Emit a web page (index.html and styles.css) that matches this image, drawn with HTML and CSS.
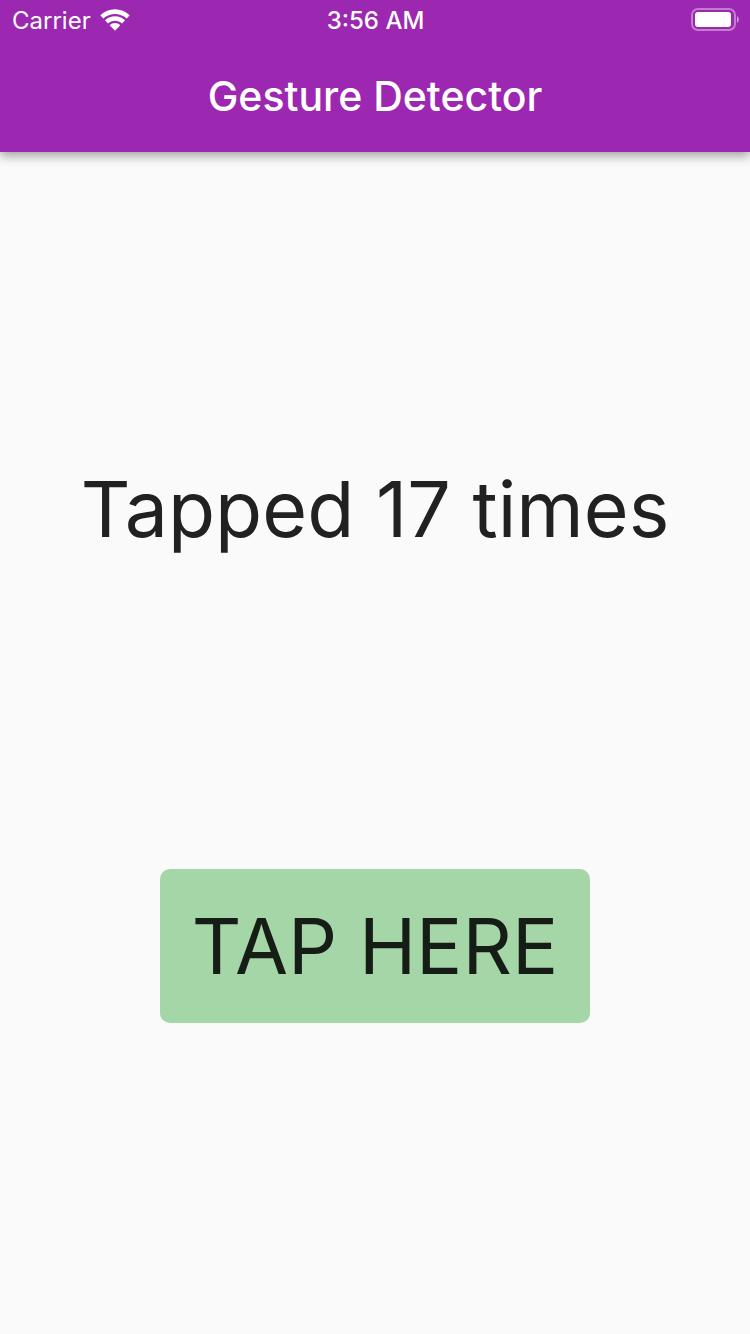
FILE: index.html
```html
<!DOCTYPE html>
<html lang="en">
<head>
<meta charset="utf-8">
<meta name="viewport" content="width=device-width, initial-scale=1">
<title>Gesture Detector</title>
<link rel="stylesheet" href="styles.css">
</head>
<body>
<header class="app-bar">
  <div class="status-bar">
    <div class="carrier">
      <span>Carrier</span>
      <svg class="wifi" viewBox="0 0 30 22" aria-hidden="true">
        <path d="M0.300 6.300C8.300-1.700 21.700-1.700 29.700 6.300L26.700 9.500C20.200 3.400 9.800 3.400 3.300 9.500Z"/>
        <path d="M5 11.200C10.500 5.800 19.500 5.800 25 11.200L22 14.400C18.100 10.800 11.900 10.800 8 14.400Z"/>
        <path d="M9.700 16.200C12.700 13.300 17.300 13.300 20.300 16.200L15 21.700Z"/>
      </svg>
    </div>
    <time class="clock">3:56 AM</time>
    <svg class="battery" viewBox="0 0 48 24" aria-hidden="true">
      <rect class="battery-case" x="1" y="1" width="43" height="21" rx="6"/>
      <rect x="4" y="4" width="36" height="15" rx="3"/>
      <path class="battery-cap" d="M46 8C48.500 9.500 48.500 13.500 46 15Z"/>
    </svg>
  </div>
  <h1 class="title">Gesture Detector</h1>
</header>
<main class="content">
  <p class="message">Tapped 17 times</p>
  <button class="tap-button" type="button">TAP HERE</button>
</main>
</body>
</html>
```

FILE: styles.css
```css
* {
  box-sizing: border-box;
}

body {
  margin: 0;
  min-height: 100vh;
  display: flex;
  flex-direction: column;
  background: #fafafa;
  color: #212121;
  font-family: Inter, "Liberation Sans", sans-serif;
}

.app-bar {
  background: #9c27b0;
  color: #fff;
  box-shadow: 0 4px 10px rgba(0, 0, 0, 0.36);
}

.status-bar {
  display: grid;
  grid-template-columns: 1fr auto 1fr;
  align-items: center;
  height: 40px;
  padding: 0 11px 0 12px;
  font-size: 24px;
}

.carrier {
  display: flex;
  align-items: center;
  gap: 9px;
}

.wifi {
  width: 30px;
  height: 22px;
  fill: currentColor;
}

.clock {
  font-weight: 500;
}

.battery {
  width: 48px;
  height: 24px;
  justify-self: end;
  fill: currentColor;
}

.battery-case {
  fill: none;
  stroke: currentColor;
  stroke-width: 2;
  opacity: 0.4;
}

.battery-cap {
  opacity: 0.5;
}

.title {
  margin: 0;
  height: 112px;
  line-height: 112px;
  text-align: center;
  font-size: 41px;
  font-weight: 500;
}

.content {
  flex: 1;
  display: flex;
  flex-direction: column;
  align-items: center;
  justify-content: space-evenly;
}

.message {
  margin: 0;
  padding-bottom: 4px;
  font-size: 77px;
  line-height: 92px;
}

.tap-button {
  padding: 32px;
  border: 0;
  border-radius: 10px;
  background: #a5d6a7;
  color: #161d16;
  font: inherit;
  font-size: 77px;
  line-height: 90px;
}
```
